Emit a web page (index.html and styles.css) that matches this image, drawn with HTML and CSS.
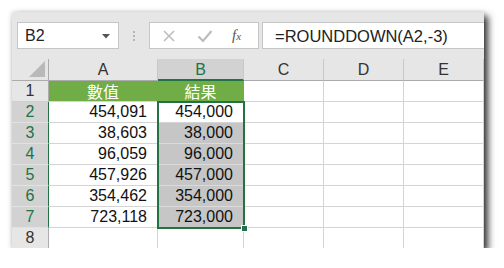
FILE: index.html
```html
<!DOCTYPE html>
<html lang="zh-Hant">
<head>
    <meta charset="UTF-8">
    <title>ROUNDDOWN</title>
    <link rel="stylesheet" href="styles.css">
</head>
<body>
    <div class="window">
        <!-- Formula bar -->
        <div class="formula-bar">
            <div class="name-box">
                <span>B2</span>
                <svg class="drop" width="8" height="5" viewBox="0 0 8 5"><path d="M0 0H8L4 4.5Z" fill="#555"/></svg>
            </div>
            <div class="grip"><i></i><i></i><i></i></div>
            <div class="fx-buttons">
                <svg width="14" height="14" viewBox="0 0 14 14"><path d="M2 2L12 12M12 2L2 12" stroke="#bdbdbd" stroke-width="1.6"/></svg>
                <svg width="16" height="14" viewBox="0 0 16 14"><path d="M1.5 7.5L6 12L14.5 2" stroke="#bdbdbd" stroke-width="2.2" fill="none"/></svg>
                <span class="fx">f<small>x</small></span>
            </div>
            <div class="formula-input">=ROUNDDOWN(A2,-3)</div>
        </div>

        <!-- Sheet -->
        <div class="sheet">
            <div class="corner"><span class="tri"></span></div>
            <div class="col-head">A</div>
            <div class="col-head sel">B</div>
            <div class="col-head">C</div>
            <div class="col-head">D</div>
            <div class="col-head">E</div>

            <div class="row-head">1</div>
            <div class="cell title">數值</div>
            <div class="cell title">結果</div>
            <div class="cell"></div><div class="cell"></div><div class="cell"></div>

            <div class="row-head sel">2</div>
            <div class="cell num">454,091</div>
            <div class="cell num">454,000</div>
            <div class="cell"></div><div class="cell"></div><div class="cell"></div>

            <div class="row-head sel">3</div>
            <div class="cell num">38,603</div>
            <div class="cell num shade">38,000</div>
            <div class="cell"></div><div class="cell"></div><div class="cell"></div>

            <div class="row-head sel">4</div>
            <div class="cell num">96,059</div>
            <div class="cell num shade">96,000</div>
            <div class="cell"></div><div class="cell"></div><div class="cell"></div>

            <div class="row-head sel">5</div>
            <div class="cell num">457,926</div>
            <div class="cell num shade">457,000</div>
            <div class="cell"></div><div class="cell"></div><div class="cell"></div>

            <div class="row-head sel">6</div>
            <div class="cell num">354,462</div>
            <div class="cell num shade">354,000</div>
            <div class="cell"></div><div class="cell"></div><div class="cell"></div>

            <div class="row-head sel">7</div>
            <div class="cell num">723,118</div>
            <div class="cell num shade">723,000</div>
            <div class="cell"></div><div class="cell"></div><div class="cell"></div>

            <div class="row-head">8</div>
            <div class="cell"></div><div class="cell"></div>
            <div class="cell"></div><div class="cell"></div><div class="cell"></div>

            <div class="selection"><span class="handle"></span></div>
        </div>
    </div>
</body>
</html>
```

FILE: styles.css
```css
:root {
    --green: #217346;
    --grid: #d4d4d4;
    --chrome: #e6e6e6;
    --head-line: #ababab;
}

* {
    box-sizing: border-box;
}

body {
    margin: 0;
    background: #ffffff;
    font-family: "Liberation Sans", Arial, sans-serif;
}

.window {
    margin: 12px 0 0 12px;
    width: 472px;
    height: 236px;
    background: var(--chrome);
    overflow: hidden;
    box-shadow: 4px 4px 7px rgba(0, 0, 0, 0.8), 0 0 5px rgba(0, 0, 0, 0.12);
}

/* Formula bar */
.formula-bar {
    display: flex;
    height: 47px;
    padding: 10px 0 10px 5px;
}

.name-box {
    width: 102px;
    background: #fff;
    border: 1px solid #c6c6c6;
    display: flex;
    align-items: center;
    justify-content: space-between;
    padding: 0 8px 0 7px;
    font-size: 16px;
    color: #222;
}

.drop {
    margin-top: 1px;
}

.grip {
    width: 30px;
    display: flex;
    flex-direction: column;
    align-items: center;
    justify-content: center;
    gap: 2px;
}

.grip i {
    width: 2px;
    height: 2px;
    background: #b4b4b4;
}

.fx-buttons {
    width: 110px;
    background: #fff;
    border: 1px solid #c6c6c6;
    display: flex;
    align-items: center;
    padding: 0 0 0 12px;
    gap: 21px;
}

.fx {
    font-family: "Liberation Serif", serif;
    font-style: italic;
    font-size: 15px;
    color: #555;
    margin-left: -2px;
}

.fx small {
    font-size: 11px;
}

.formula-input {
    flex: 1;
    margin-left: 3px;
    background: #fff;
    border: 1px solid #c6c6c6;
    border-right: none;
    display: flex;
    align-items: center;
    padding: 1px 0 0 12px;
    font-size: 16.5px;
    color: #222;
}

/* Sheet */
.sheet {
    position: relative;
    display: grid;
    grid-template-columns: 37px 109px 86px 80px 80px 80px;
    grid-template-rows: 22px repeat(8, 21px);
    background: #fff;
    font-size: 16px;
}

.corner {
    position: relative;
    background: var(--chrome);
    border-right: 1px solid var(--head-line);
    border-bottom: 1px solid var(--head-line);
}

.tri {
    position: absolute;
    right: 3px;
    bottom: 3px;
    width: 0;
    height: 0;
    border-left: 16px solid transparent;
    border-bottom: 16px solid #b9b9b9;
}

.col-head {
    background: var(--chrome);
    border-right: 1px solid #c8c8c8;
    border-bottom: 1px solid var(--head-line);
    display: flex;
    align-items: center;
    justify-content: center;
    color: #333;
    padding-top: 1px;
}

.col-head.sel {
    background: #d2d2d2;
    color: var(--green);
    border-bottom: 2px solid var(--green);
}

.row-head {
    background: var(--chrome);
    border-right: 1px solid var(--head-line);
    border-bottom: 1px solid #cfcfcf;
    display: flex;
    align-items: center;
    justify-content: center;
    color: #333;
}

.row-head.sel {
    background: #d2d2d2;
    color: var(--green);
    border-right-color: var(--green);
    border-bottom-color: #e2e2e2;
}

.cell {
    border-right: 1px solid var(--grid);
    border-bottom: 1px solid var(--grid);
    display: flex;
    align-items: center;
    color: #111;
    white-space: nowrap;
}

.cell.num {
    justify-content: flex-end;
    padding-right: 10px;
}

.cell.title {
    background: #70ad47;
    color: #fff;
    justify-content: center;
    font-family: "Noto Sans CJK TC", "Noto Sans CJK SC", sans-serif;
    font-size: 16px;
    border-right-color: #70ad47;
}

.cell.shade {
    background: #c6c6c6;
    border-bottom-color: #dadada;
}

/* Selected range B2:B7 */
.selection {
    position: absolute;
    left: 145px;
    top: 42px;
    width: 88px;
    height: 128px;
    border: 2px solid var(--green);
}

.handle {
    position: absolute;
    right: -5px;
    bottom: -5px;
    width: 7px;
    height: 7px;
    background: var(--green);
    border: 1px solid #fff;
}
```
